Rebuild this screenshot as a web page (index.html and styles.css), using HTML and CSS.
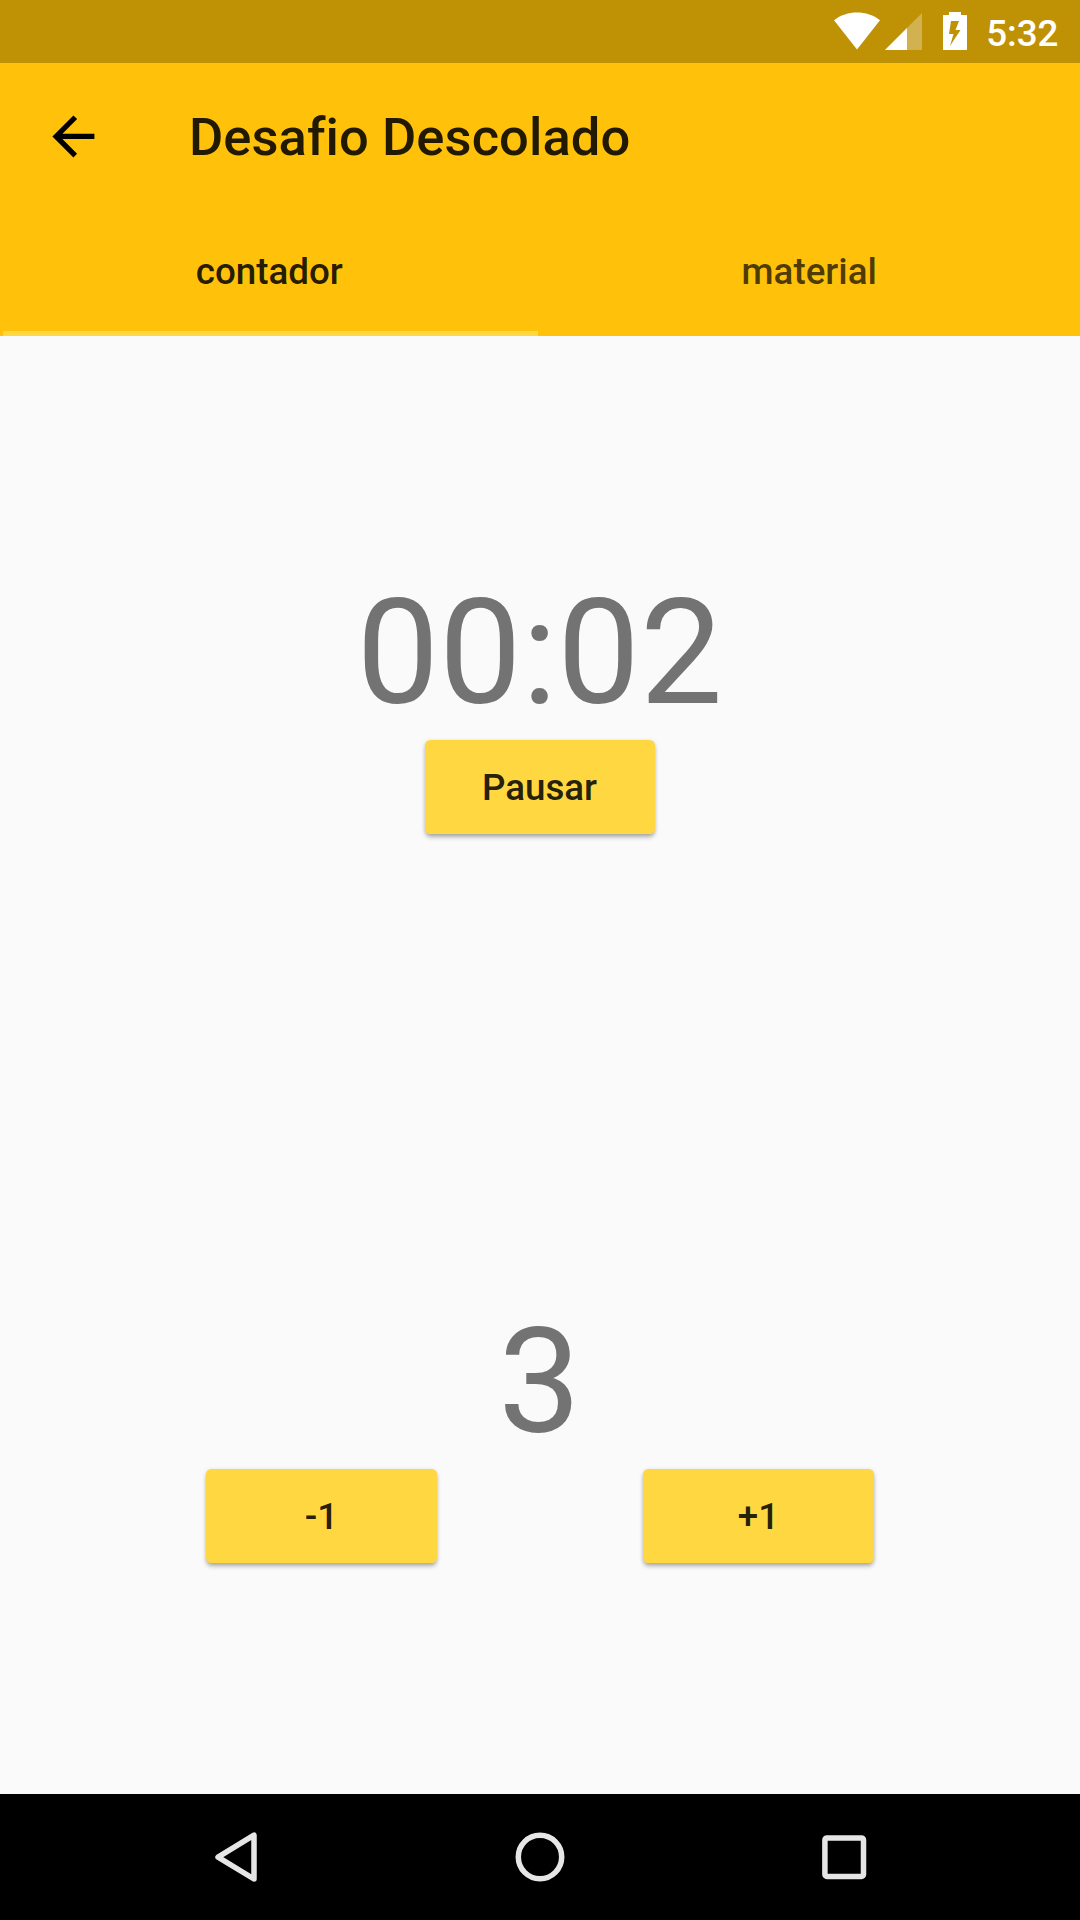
FILE: index.html
```html
<!DOCTYPE html>
<html lang="pt-BR">
<head>
<meta charset="utf-8">
<title>Desafio Descolado</title>
<link rel="stylesheet" href="styles.css">
</head>
<body>
<div class="status-bar">
  <svg class="wifi" width="48" height="38" viewBox="0 0 48 38"><path d="M24 37.5 1 8.3C7.5 3 15.500 0.500 24 0.500S40.500 3 47 8.300Z" fill="#fff"/></svg>
  <svg class="signal" width="37" height="37" viewBox="0 0 37 37"><path d="M0 37 37 0V37Z" fill="#fff" fill-opacity=".3"/><path d="M0 37 22 15V37Z" fill="#fff"/></svg>
  <svg class="battery" width="24" height="38" viewBox="0 0 24 38"><path fill="#fff" fill-rule="evenodd" d="M6 0H18V3H23.500Q24 3 24 3.500V37.500Q24 38 23.500 38H.5Q0 38 0 37.500V3.500Q0 3 .5 3H6ZM8 9 6 22H10.500L7 34 17.500 18H12.500L16 9Z"/></svg>
  <span class="clock">5:32</span>
</div>
<header class="app-bar">
  <div class="toolbar">
    <svg class="back" width="42" height="42" viewBox="3.850 3.850 16 16"><path d="M20 11H7.830l5.590-5.590L12 4l-8 8 8 8 1.410-1.410L7.830 13H20v-2z"/></svg>
    <h1 class="title">Desafio Descolado</h1>
  </div>
  <nav class="tabs">
    <div class="tab tab-active">contador</div>
    <div class="tab">material</div>
  </nav>
</header>
<main class="content">
  <section class="panel">
    <div class="display">00:02</div>
    <div class="actions actions-single"><button class="button">Pausar</button></div>
  </section>
  <section class="panel">
    <div class="display">3</div>
    <div class="actions"><button class="button">-1</button><button class="button">+1</button></div>
  </section>
</main>
<footer class="nav-bar">
  <svg class="nav-back" width="44" height="52" viewBox="0 0 44 52"><path d="M40 4.200V48L4 26.100Z"/></svg>
  <svg class="nav-home" width="52" height="52" viewBox="0 0 52 52"><circle cx="26" cy="26" r="21.700"/></svg>
  <svg class="nav-recent" width="46" height="46" viewBox="0 0 46 46"><rect x="3.900" y="3.900" width="38.600" height="38.600" rx="2"/></svg>
</footer>
</body>
</html>
```
FILE: styles.css
```css
* { box-sizing: border-box; }

body {
  margin: 0;
  width: 1080px;
  height: 1920px;
  display: flex;
  flex-direction: column;
  overflow: hidden;
  background: #fafafa;
  font-family: Roboto, sans-serif;
  color: rgba(0, 0, 0, 0.87);
}

svg { display: block; flex: none; }

.status-bar {
  height: 63px;
  display: flex;
  align-items: flex-start;
  justify-content: flex-end;
  padding: 12px 21.5px 0 0;
  background: #bf9105;
  color: #fff;
}
.signal { margin: 1px 21px 0 4px; }
.clock {
  margin-left: 19.5px;
  font-size: 36.75px;
  font-weight: 500;
  line-height: 43px;
}

.app-bar { background: #ffc10a; }
.toolbar {
  height: 147px;
  display: flex;
  align-items: center;
  padding: 0 0 1px 52px;
}
.back { overflow: visible; }
.title {
  margin: 0 0 0 95px;
  padding-top: 2px;
  font-size: 52.5px;
  font-weight: 500;
  line-height: 62px;
  letter-spacing: 0.07px;
  font-variant-ligatures: none;
}
.tabs { height: 126px; display: flex; }
.tab {
  flex: 1;
  display: flex;
  align-items: center;
  justify-content: center;
  padding: 0 1.5px 4px 0;
  font-size: 36.75px;
  font-weight: 500;
  line-height: 43px;
  color: rgba(0, 0, 0, 0.7);
}
.tab-active {
  color: rgba(0, 0, 0, 0.87);
  background: linear-gradient(#ffd740, #ffd740) 2.6px 100% / 535px 5.25px no-repeat;
}

.content { flex: 1; display: flex; flex-direction: column; }
.panel {
  flex: 1;
  display: flex;
  flex-direction: column;
  justify-content: center;
}
.display {
  padding-right: 1px;
  font-size: 147px;
  line-height: 173px;
  text-align: center;
  color: #737373;
}
.actions { display: flex; justify-content: space-evenly; }
.button {
  width: 231px;
  height: 94.5px;
  padding: 0;
  border: 0;
  border-radius: 5.25px;
  background: #ffd740;
  color: rgba(0, 0, 0, 0.87);
  font: 500 36.75px/43px Roboto, sans-serif;
  box-shadow: 0 4px 5px -1px rgba(0, 0, 0, 0.28), 0 1px 4px rgba(0, 0, 0, 0.14);
}
.actions-single .button { width: 230px; padding-right: 1px; }

.nav-bar {
  height: 126px;
  display: flex;
  align-items: center;
  padding-left: 214px;
  background: #000;
}
.nav-bar svg { fill: none; stroke: #e6e6e6; stroke-width: 5.5px; stroke-linejoin: round; }
.nav-home { margin-left: 256px; }
.nav-recent { margin-left: 255px; }
```
